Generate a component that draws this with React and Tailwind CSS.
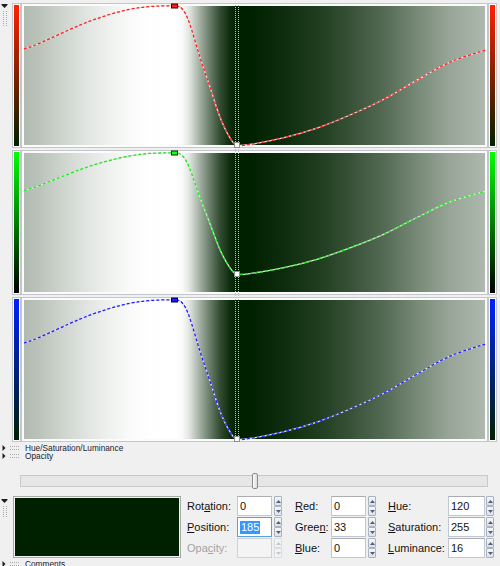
import React from "react";

const W = 461;
const H = 139;
const PTS = [
  [0, 176], [16, 187], [56, 220], [83, 238], [106, 249], [126, 254], [150, 255],
  [158, 250], [165, 226], [176, 161], [186, 106], [196, 51], [206, 13], [213, 0],
  [226, 1], [259, 13], [293, 31], [326, 55], [359, 83], [393, 119], [426, 152], [461, 174],
];

const f = (n) => Math.round(n * 100) / 100;

function curvePath(map) {
  const p = PTS.map(([x, v]) => [x, (1 - map(v) / 255) * H]);
  let d = `M${f(p[0][0])},${f(p[0][1])}`;
  for (let i = 0; i < p.length - 1; i++) {
    const p0 = p[i - 1] || p[i];
    const p1 = p[i];
    const p2 = p[i + 1];
    const p3 = p[i + 2] || p2;
    const c1 = [p1[0] + (p2[0] - p0[0]) / 6, p1[1] + (p2[1] - p0[1]) / 6];
    const c2 = [p2[0] - (p3[0] - p1[0]) / 6, p2[1] - (p3[1] - p1[1]) / 6];
    d += ` C${f(c1[0])},${f(c1[1])} ${f(c2[0])},${f(c2[1])} ${f(p2[0])},${f(p2[1])}`;
  }
  return d;
}

const GRAD =
  "bg-[linear-gradient(to_right,#b0bab0_0%,#bbc4bb_3.5%,#dce0dc_12.1%,#eef0ee_18%,#f9faf9_23%,#fefefe_27.3%,#ffffff_32.5%,#fafbfa_34.3%,#e2e6e2_35.8%,#a1ada1_38.2%,#6a7d6a_40.3%,#334d33_42.5%,#0d2c0d_44.7%,#002100_46.2%,#002100_49%,#0d2c0d_56.2%,#1f3c1f_63.6%,#375137_70.7%,#536953_77.9%,#778977_85.2%,#98a598_92.4%,#aeb8ae_100%)]";

function Panel({ bar, stroke, map, fill, edge }) {
  const d = curvePath(map);
  const yTop = (1 - map(255) / 255) * H;
  const yBot = (1 - map(0) / 255) * H;
  return (
    <div className="flex h-[145px]">
      <div className="w-[9px] border border-[#c3c7cc] bg-white p-[1px]">
        <div className={`h-full ${bar}`} />
      </div>
      <div className="w-[467px] border border-[#c3c7cc] bg-[#fbfbfb] p-[2px]">
        <div className={`relative h-full ${GRAD}`}>
          <svg className="absolute left-0 top-0 z-20 overflow-visible" width={W} height={H}>
            <path d={d} fill="none" stroke="#e4e4e4" strokeWidth="1.3" />
            <path d={d} fill="none" stroke={stroke} strokeWidth="1.3" strokeDasharray="3 2" />
            <rect x="147.5" y={yTop - 2} width="6" height="4" fill={fill} stroke={edge} strokeWidth="1" />
            <rect x="210.5" y={yBot - 2.5} width="5" height="5" fill="#ffffff" stroke="#8c8c8c" strokeWidth="1" />
          </svg>
        </div>
      </div>
      <div className="w-[9px] border border-[#c3c7cc] bg-white p-[1px]">
        <div className={`h-full ${bar}`} />
      </div>
    </div>
  );
}

function GripH() {
  const xs = [10, 12, 14, 16, 18];
  return (
    <svg width="25" height="8" className="shrink-0">
      <path d="M2.5 1 L2.5 7 L5.5 4 Z" fill="#1e1e1e" />
      {xs.map((x) => (
        <rect key={"a" + x} x={x} y="2" width="1" height="1" fill="#a9a9a9" />
      ))}
      {xs.map((x) => (
        <rect key={"b" + x} x={x} y="5" width="1" height="1" fill="#a9a9a9" />
      ))}
    </svg>
  );
}

function FoldRow({ label }) {
  return (
    <div className="flex h-[8px] items-center">
      <GripH />
      <span className="whitespace-nowrap text-[8.3px] leading-[8px] text-[#1a1a2e]">{label}</span>
    </div>
  );
}

function GripV({ n }) {
  const ys = Array.from({ length: n }, (_, i) => 7 + i * 2);
  return (
    <svg width="8" height={8 + n * 2}>
      <rect x="0.5" y="0" width="6" height="1" fill="#1e1e1e" />
      <path d="M0.5 1 L6.5 1 L3.5 4 Z" fill="#1e1e1e" />
      {ys.map((y) => (
        <rect key={"l" + y} x="2" y={y} width="1" height="1" fill="#a9a9a9" />
      ))}
      {ys.map((y) => (
        <rect key={"r" + y} x="5" y={y} width="1" height="1" fill="#a9a9a9" />
      ))}
    </svg>
  );
}

function Spin({ disabled }) {
  const arrow = disabled ? "#c4c8cc" : "#4d5e7c";
  const box = disabled
    ? "flex h-[10px] items-center justify-center rounded-[1px] border border-[#d8dbdf] bg-[#f4f4f4]"
    : "flex h-[10px] items-center justify-center rounded-[1px] border border-[#a9b2be] bg-[linear-gradient(to_bottom,#f6f7f9,#dde2e8)]";
  return (
    <div className="flex h-[20px] w-[8px] flex-col gap-[0px]">
      <div className={box}>
        <svg width="5" height="3">
          <path d="M0 3 L2.5 0 L5 3 Z" fill={arrow} />
        </svg>
      </div>
      <div className={box}>
        <svg width="5" height="3">
          <path d="M0 0 L2.5 3 L5 0 Z" fill={arrow} />
        </svg>
      </div>
    </div>
  );
}

function Field({ pre, u, post, value, labelW, inputW, spinGap, focused, disabled }) {
  const inputCls = disabled
    ? "h-[20px] border border-[#cfd1d4] bg-[#f4f4f4]"
    : focused
    ? "flex h-[20px] items-center border border-[#5a9fe0] bg-white pl-[2px]"
    : "flex h-[20px] items-center border border-[#c2c7cf] border-t-[#abadb3] bg-white pl-[2px]";
  return (
    <div className="flex h-[20px] items-center">
      <div className={`${labelW} whitespace-nowrap text-[11px] leading-[13px] ${disabled ? "text-[#a3a3a3]" : "text-[#111111]"}`}>
        {pre}
        <span className="underline underline-offset-[1px]">{u}</span>
        {post}
      </div>
      <div className={`${inputW} ${inputCls} text-[11px] leading-[13px] text-[#111111]`}>
        {focused ? <span className="bg-[#3399ff] px-[1px] text-white">{value}</span> : value}
      </div>
      <div className={spinGap}>
        <Spin disabled={disabled} />
      </div>
    </div>
  );
}

export default function App() {
  return (
    <div className="relative h-[566px] w-[500px] overflow-hidden bg-[#f0f0f0] font-['Liberation_Sans',Arial,sans-serif]">
      <div className="flex pt-[3px]">
        <div className="w-[12px] pl-[1px] pt-[1px]">
          <GripV n={8} />
        </div>
        <div className="flex flex-col gap-[2px]">
          <Panel
            bar="bg-[linear-gradient(to_bottom,#ff2100,#002100)]"
            stroke="#ff1e1e"
            fill="#ff1a1a"
            edge="#3a0000"
            map={(v) => v}
          />
          <Panel
            bar="bg-[linear-gradient(to_bottom,#00ff00,#000000)]"
            stroke="#1ee81e"
            fill="#1aff1a"
            edge="#003300"
            map={(v) => 33 + (v * 222) / 255}
          />
          <Panel
            bar="bg-[linear-gradient(to_bottom,#0021ff,#002100)]"
            stroke="#1e1eff"
            fill="#1a1aff"
            edge="#00003a"
            map={(v) => v}
          />
        </div>
      </div>

      <div className="absolute left-[235px] top-[3px] z-10 h-[439px] w-[4px] border-x border-dotted border-[#c2c2c2]" />

      <div className="mt-[2px]">
        <FoldRow label="Hue/Saturation/Luminance" />
        <FoldRow label="Opacity" />
      </div>

      <div className="relative ml-[20px] mt-[13px] w-[468px] py-[2px]">
        <div className="h-[12px] border border-[#c9c9c9] bg-[#e6e6e6]" />
        <div className="absolute left-[232px] top-0 h-[16px] w-[6px] rounded-[2px] border border-[#8d8d8d] bg-[linear-gradient(to_right,#fdfdfd,#dcdcdc)]" />
      </div>

      <div className="mt-[7px] flex h-[63px]">
        <div className="w-[13px] pl-[1px] pt-[3px]">
          <GripV n={6} />
        </div>
        <div className="h-[62px] w-[168px] border border-[#a9a9a9] bg-[#f4f4f4] p-[1px]">
          <div className="h-full bg-[#002100]" />
        </div>
        <div className="ml-[6px] flex">
          <div className="flex flex-col gap-[1px]">
            <Field pre="Rot" u="a" post="tion:" value="0" labelW="w-[50px]" inputW="w-[35px]" spinGap="ml-[2px]" />
            <Field pre="" u="P" post="osition:" value="185" labelW="w-[50px]" inputW="w-[35px]" spinGap="ml-[2px]" focused />
            <Field pre="Opa" u="c" post="ity:" value="" labelW="w-[50px]" inputW="w-[35px]" spinGap="ml-[2px]" disabled />
          </div>
          <div className="ml-[13px] flex flex-col gap-[1px]">
            <Field pre="" u="R" post="ed:" value="0" labelW="w-[36px]" inputW="w-[35px]" spinGap="ml-[2px]" />
            <Field pre="Gree" u="n" post=":" value="33" labelW="w-[36px]" inputW="w-[35px]" spinGap="ml-[2px]" />
            <Field pre="" u="B" post="lue:" value="0" labelW="w-[36px]" inputW="w-[35px]" spinGap="ml-[2px]" />
          </div>
          <div className="ml-[12px] flex flex-col gap-[1px]">
            <Field pre="" u="H" post="ue:" value="120" labelW="w-[60px]" inputW="w-[37px]" spinGap="ml-[1px]" />
            <Field pre="" u="S" post="aturation:" value="255" labelW="w-[60px]" inputW="w-[37px]" spinGap="ml-[1px]" />
            <Field pre="" u="L" post="uminance:" value="16" labelW="w-[60px]" inputW="w-[37px]" spinGap="ml-[1px]" />
          </div>
        </div>
      </div>

      <div className="mt-[1px]">
        <FoldRow label="Comments" />
      </div>
    </div>
  );
}
